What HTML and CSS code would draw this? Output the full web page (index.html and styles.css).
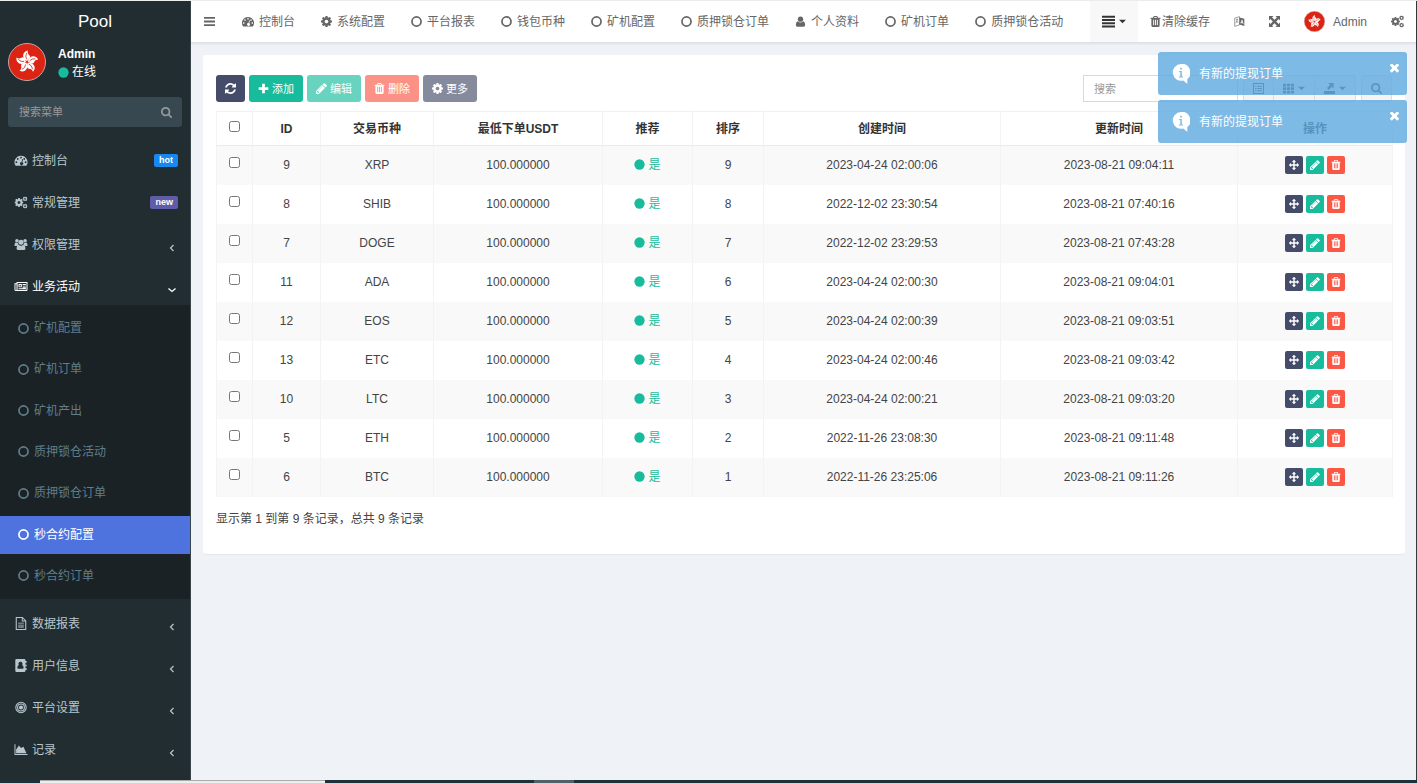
FILE: index.html
```html
<!DOCTYPE html>
<html lang="zh-CN">
<head>
<meta charset="utf-8">
<title>Pool</title>
<link rel="stylesheet" href="styles.css">
</head>
<body>
<svg class="sprite" aria-hidden="true">
  <symbol id="i-bars" viewBox="0 0 16 16"><path d="M0 1.500h16v2.600H0zM0 6.700h16v2.600H0zM0 11.900h16v2.600H0z"/></symbol>
  <symbol id="i-lines" viewBox="0 0 16 16"><path d="M0 1h16v2.400H0zM0 5h16v2.400H0zM0 9h16v2.400H0zM0 13h16v2.400H0z"/></symbol>
  <symbol id="i-ring" viewBox="0 0 16 16"><circle cx="8" cy="8" r="6.600" fill="none" stroke="currentColor" stroke-width="2.500"/></symbol>
  <symbol id="i-dot" viewBox="0 0 16 16"><circle cx="8" cy="8" r="7.500"/></symbol>
  <symbol id="i-caret" viewBox="0 0 16 16"><path d="M0 4h16l-8 8z"/></symbol>
  <symbol id="i-left" viewBox="0 0 16 16"><path d="M11 2L5 8l6 6" fill="none" stroke="currentColor" stroke-width="2.400"/></symbol>
  <symbol id="i-down" viewBox="0 0 16 16"><path d="M1 5l7 6 7-6" fill="none" stroke="currentColor" stroke-width="2.600"/></symbol>
  <symbol id="i-gauge" viewBox="0 0 16 16"><path fill-rule="evenodd" d="M8 2a8 8 0 0 0-6.800 12.200q.2.300.6.300h12.400q.4 0 .6-.3A8 8 0 0 0 8 2zM2.300 9a1.100 1.100 0 1 1 0 2.200 1.100 1.100 0 0 1 0-2.200zm1.700-4a1.100 1.100 0 1 1 0 2.200A1.100 1.100 0 0 1 4 5zm4-1.700a1.100 1.100 0 1 1 0 2.200 1.100 1.100 0 0 1 0-2.200zm4 1.700a1.100 1.100 0 1 1 0 2.200 1.100 1.100 0 0 1 0-2.200zm1.700 4a1.100 1.100 0 1 1 0 2.200 1.100 1.100 0 0 1 0-2.200zM9.700 6.300l.9.300-1 3.600a1.900 1.900 0 1 1-1-.2z"/></symbol>
  <symbol id="i-search" viewBox="64 128 1664 1664"><path d="M1216 832q0-185-131.500-316.500t-316.500-131.500-316.500 131.500-131.500 316.500 131.500 316.500 316.500 131.500 316.500-131.500 131.500-316.500zm512 832q0 52-38 90t-90 38q-54 0-90-38l-343-342q-179 124-399 124-143 0-273.500-55.500t-225-150-150-225-55.500-273.500 55.500-273.500 150-225 225-150 273.500-55.500 273.500 55.500 225 150 150 225 55.500 273.500q0 220-124 399l343 343q37 37 37 90z"/></symbol>
  <symbol id="i-trash" viewBox="192 128 1408 1536"><path d="M704 1376v-704q0-14-9-23t-23-9h-64q-14 0-23 9t-9 23v704q0 14 9 23t23 9h64q14 0 23-9t9-23zm256 0v-704q0-14-9-23t-23-9h-64q-14 0-23 9t-9 23v704q0 14 9 23t23 9h64q14 0 23-9t9-23zm256 0v-704q0-14-9-23t-23-9h-64q-14 0-23 9t-9 23v704q0 14 9 23t23 9h64q14 0 23-9t9-23zm-544-992h448l-48-117q-7-9-17-11h-317q-10 2-17 11zm928 32v64q0 14-9 23t-23 9h-96v948q0 83-47 143.500t-113 60.500h-832q-66 0-113-58.500t-47-141.500v-952h-96q-14 0-23-9t-9-23v-64q0-14 9-23t23-9h309l70-167q15-37 54-63t79-26h320q40 0 79 26t54 63l70 167h309q14 0 23 9t9 23z"/></symbol>
  <symbol id="i-cog" viewBox="128 128 1536 1536"><path d="M1152 896q0-106-75-181t-181-75-181 75-75 181 75 181 181 75 181-75 75-181zm512-109v222q0 12-8 23t-20 13l-185 28q-19 54-39 91 35 50 107 138 10 12 10 25t-9 23q-27 37-99 108t-94 71q-12 0-26-9l-138-108q-44 23-91 38-16 136-29 186-7 28-36 28h-222q-14 0-24.500-8.500t-11.500-21.500l-28-184q-49-16-90-37l-141 107q-10 9-25 9-14 0-25-11-126-114-165-168-7-10-7-23 0-12 8-23 15-21 51-66.500t54-70.500q-27-50-41-99l-183-27q-13-2-21-12.500t-8-23.500v-222q0-12 8-23t19-13l186-28q14-46 39-92-40-57-107-138-10-12-10-24 0-10 9-23 26-36 98.500-107.500t94.500-71.500q13 0 26 10l138 107q44-23 91-38 16-136 29-186 7-28 36-28h222q14 0 24.500 8.500t11.500 21.500l28 184q49 16 90 37l142-107q9-9 24-9 13 0 25 10 129 119 165 170 7 8 7 22 0 12-8 23-15 21-51 66.500t-54 70.500q26 50 41 98l183 28q13 2 21 12.500t8 23.500z"/></symbol>
  <symbol id="i-cogs" viewBox="0 0 16 16"><use href="#i-cog" x="0" y="2.500" width="11" height="11"/><use href="#i-cog" x="10" y=".5" width="6" height="6"/><use href="#i-cog" x="10" y="9.500" width="6" height="6"/></symbol>
  <symbol id="i-pencil" viewBox="128 128 1536 1536"><path d="M491 1536l91-91-235-235-91 91v107h128v128h107zm523-928q0-22-22-22-10 0-17 7l-542 542q-7 7-7 17 0 22 22 22 10 0 17-7l542-542q7-7 7-17zm-54-192l416 416-832 832h-416v-416zm683 96q0 53-37 90l-166 166-416-416 166-165q36-38 90-38 53 0 91 38l235 234q37 39 37 91z"/></symbol>
  <symbol id="i-refresh" viewBox="128 128 1536 1536"><path d="M1639 1056q0 5-1 7-64 268-268 434.500t-478 166.500q-146 0-282.500-55t-243.500-157l-129 129q-19 19-45 19t-45-19-19-45v-448q0-26 19-45t45-19h448q26 0 45 19t19 45-19 45l-137 137q71 66 161 102t187 36q134 0 250-65t186-179q11-17 53-117 8-23 30-23h192q13 0 22.500 9.500t9.500 22.500zm25-800v448q0 26-19 45t-45 19h-448q-26 0-45-19t-19-45 19-45l138-138q-148-137-349-137-134 0-250 65t-186 179q-11 17-53 117-8 23-30 23h-199q-13 0-22.500-9.500t-9.500-22.500v-7q65-268 270-434.500t480-166.500q146 0 284 55.500t245 156.500l130-129q19-19 45-19t45 19 19 45z"/></symbol>
  <symbol id="i-plus" viewBox="0 0 16 16"><path d="M6 1h4v5h5v4h-5v5H6v-5H1V6h5z"/></symbol>
  <symbol id="i-move" viewBox="0 0 1792 1792"><path d="M1792 896q0 26-19 45l-256 256q-19 19-45 19t-45-19-19-45v-128h-384v384h128q26 0 45 19t19 45-19 45l-256 256q-19 19-45 19t-45-19l-256-256q-19-19-19-45t19-45 45-19h128v-384h-384v128q0 26-19 45t-45 19-45-19l-256-256q-19-19-19-45t19-45l256-256q19-19 45-19t45 19 19 45v128h384v-384h-128q-26 0-45-19t-19-45 19-45l256-256q19-19 45-19t45 19l256 256q19 19 19 45t-19 45-45 19h-128v384h384v-128q0-26 19-45t45-19 45 19l256 256q19 19 19 45z"/></symbol>
  <symbol id="i-times" viewBox="302 434 1188 1188"><path d="M1490 1322q0 40-28 68l-136 136q-28 28-68 28t-68-28l-294-294-294 294q-28 28-68 28t-68-28l-136-136q-28-28-28-68t28-68l294-294-294-294q-28-28-28-68t28-68l136-136q28-28 68-28t68 28l294 294 294-294q28-28 68-28t68 28l136 136q28 28 28 68t-28 68l-294 294 294 294q28 28 28 68z"/></symbol>
  <symbol id="i-user" viewBox="0 0 16 16"><circle cx="8" cy="4.600" r="3.900"/><path d="M4 7.500q4 3.600 8 0 2.800 1.200 2.800 5.500 0 2.500-2.300 2.500h-9q-2.300 0-2.300-2.500 0-4.300 2.800-5.500z"/></symbol>
  <symbol id="i-users" viewBox="0 0 16 16"><circle cx="3" cy="3.400" r="2.200"/><circle cx="13" cy="3.400" r="2.200"/><circle cx="8" cy="5.200" r="3.100"/><path d="M0 9.500Q0 5.800 1.300 5.600q1.600 1 3 .3-.2 1.500.8 2.600-1.600 0-2.500 1.300H1Q0 10 0 9.500zM16 9.500q0-3.700-1.300-3.900-1.600 1-3 .3.200 1.500-.8 2.600 1.600 0 2.500 1.300H15q1 .2 1-.3zM5 8.300q3 2.200 6 0 2.500.5 2.500 4.200 0 2.300-2 2.300h-7q-2 0-2-2.300Q2.500 8.800 5 8.300z"/></symbol>
  <symbol id="i-news" viewBox="0 0 16 16"><path fill-rule="evenodd" d="M2.500 2.500H16v9.700q0 1.300-1.300 1.300H1.500Q0 13.500 0 12V4h2.500zm-1.300 2.700V12q0 .6.700.6.600 0 .6-.6V5.200zm2.600-1.500v8.500h10.400q.6 0 .6-.6V3.700zM5 5h4v4H5zm1.200 1.200v1.700h1.600V6.200zM10 5h4v1h-4zm0 2h4v1h-4zm0 2h4v1h-4zM5 10.300h9v1H5z"/></symbol>
  <symbol id="i-file" viewBox="0 0 16 16"><path fill-rule="evenodd" d="M1.500 0H10l4.500 4.500V16h-13zm1.300 1.300v13.400h10.400V5.500H9V1.300zm7.400.5v2.500h2.500zM4.500 7h7v1.100h-7zm0 2.400h7v1.100h-7zm0 2.400h7v1.100h-7z"/></symbol>
  <symbol id="i-book" viewBox="0 0 16 16"><path fill-rule="evenodd" d="M1 1.500Q1 0 2.500 0h9.500q1.500 0 1.500 1.500v1H15v2h-1.500V7H15v2h-1.500v2.500H15v2h-1.500v1q0 1.500-1.500 1.500H2.500Q1 16 1 14.500zM7.300 3.500a2.400 2.400 0 0 0-1.900 4q-1.900.7-1.900 3.200 0 1.300 1.200 1.300H10q1.200 0 1.200-1.300 0-2.500-1.900-3.200a2.400 2.400 0 0 0-2-4z"/></symbol>
  <symbol id="i-target" viewBox="0 0 16 16"><g fill="none" stroke="currentColor" stroke-width="1.300"><circle cx="8" cy="8" r="6.400"/><circle cx="8" cy="8" r="4.200"/></g><circle cx="8" cy="8" r="2.500"/></symbol>
  <symbol id="i-area" viewBox="0 0 16 16"><path d="M0 1.500h1.200v12H16v1.200H0zM2 12.700V8l3.500-5L8 6l3-1.500 3.700 8.200z"/></symbol>
  <symbol id="i-lang" viewBox="0 0 16 16"><path d="M1 3l7-2v12l-7 2zM3 5.500l3-.8M4.500 4v2q0 3-2 4.500M3.500 7q1 2 3 2.500" fill="none" stroke="currentColor" stroke-width=".9"/><path fill-rule="evenodd" d="M8 2l7 2v10.500l-7-2zm3.200 3.300l-2 5.300 1.200.3.300-1.100 1.700.5.300 1.200 1.200.4-1.700-6.300zm.4 1.800l.5 2-1-.3z"/></symbol>
  <symbol id="i-expand" viewBox="0 0 16 16"><path d="M0 0h6.500L4.500 2 8 5.500 11.500 2l-2-2H16v6.500l-2-2L10.500 8l3.500 3.500 2-2V16H9.500l2-2L8 10.500 4.500 14l2 2H0V9.500l2 2L5.500 8 2 4.500l-2 2z"/></symbol>
  <symbol id="i-list" viewBox="0 0 16 16"><path fill-rule="evenodd" d="M0 0h16v16H0zm1.500 1.500v13h13v-13zM3 4h2v1.500H3zm3.200 0H13v1.500H6.200zM3 7.200h2v1.500H3zm3.200 0H13v1.500H6.200zM3 10.500h2V12H3zm3.200 0H13V12H6.200z"/></symbol>
  <symbol id="i-grid" viewBox="0 0 16 16"><path d="M0 1h4.500v4H0zm5.700 0h4.500v4H5.700zm5.800 0H16v4h-4.500zM0 6.200h4.500v4H0zm5.700 0h4.500v4H5.700zm5.800 0H16v4h-4.500zM0 11.400h4.500v4H0zm5.700 0h4.500v4H5.700zm5.800 0H16v4h-4.500z"/></symbol>
  <symbol id="i-export" viewBox="0 0 16 16"><path d="M0 11.500h16V16H0zM6 0h8v8l-2.600-2.600L7 10 4.300 7.300l4.500-4.500z"/></symbol>
  <symbol id="i-info" viewBox="0 0 20 22"><path fill-rule="evenodd" d="M10 0a9.300 9.300 0 1 0 2.500 18.300L17 22v-5.500A9.300 9.300 0 0 0 10 0zM9.100 4h1.900v2H9.100zM8 7.700h2.900v6.100h1.300v1H7.700v-1h1.500V8.700H8z"/></symbol>
  <symbol id="i-flower" viewBox="0 0 40 40">
    <circle cx="20" cy="20" r="19.500" fill="#dc2414" stroke="#c9a9a6"/>
    <g fill="#fff" stroke="none">
      <g id="petal"><path d="M20 19C14 16 15 9 21 8q-1 3 1.500 5T20 19z"/><path d="M19.700 17q-2-3 0-6.500" fill="none" stroke="#dc2414" stroke-width=".8"/></g>
      <use href="#petal" transform="rotate(72 20 20)"/><use href="#petal" transform="rotate(144 20 20)"/><use href="#petal" transform="rotate(216 20 20)"/><use href="#petal" transform="rotate(288 20 20)"/>
    </g>
  </symbol>
</svg>

<div class="app">
  <aside class="sidebar">
    <a class="logo" href="#">Pool</a>
    <div class="profile">
      <svg class="avatar"><use href="#i-flower"/></svg>
      <div class="profile-text"><strong>Admin</strong><span class="status"><svg class="ico ico-dot"><use href="#i-dot"/></svg>在线</span></div>
    </div>
    <form class="menu-search">
      <input type="text" placeholder="搜索菜单" aria-label="搜索菜单">
      <button type="button" aria-label="搜索"><svg class="ico"><use href="#i-search"/></svg></button>
    </form>
    <nav class="menu">
      <a class="item" href="#"><svg class="ico ico-menu"><use href="#i-gauge"/></svg>控制台<span class="tag tag-hot">hot</span></a>
      <a class="item" href="#"><svg class="ico ico-menu"><use href="#i-cogs"/></svg>常规管理<span class="tag tag-new">new</span></a>
      <a class="item" href="#"><svg class="ico ico-menu"><use href="#i-users"/></svg>权限管理<svg class="arrow"><use href="#i-left"/></svg></a>
      <a class="item item-open" href="#"><svg class="ico ico-menu"><use href="#i-news"/></svg>业务活动<svg class="arrow"><use href="#i-down"/></svg></a>
      <div class="submenu">
        <a class="sub" href="#"><svg class="ico"><use href="#i-ring"/></svg>矿机配置</a>
        <a class="sub" href="#"><svg class="ico"><use href="#i-ring"/></svg>矿机订单</a>
        <a class="sub" href="#"><svg class="ico"><use href="#i-ring"/></svg>矿机产出</a>
        <a class="sub" href="#"><svg class="ico"><use href="#i-ring"/></svg>质押锁仓活动</a>
        <a class="sub" href="#"><svg class="ico"><use href="#i-ring"/></svg>质押锁仓订单</a>
        <a class="sub sub-active" href="#"><svg class="ico"><use href="#i-ring"/></svg>秒合约配置</a>
        <a class="sub" href="#"><svg class="ico"><use href="#i-ring"/></svg>秒合约订单</a>
      </div>
      <a class="item" href="#"><svg class="ico ico-menu"><use href="#i-file"/></svg>数据报表<svg class="arrow"><use href="#i-left"/></svg></a>
      <a class="item" href="#"><svg class="ico ico-menu"><use href="#i-book"/></svg>用户信息<svg class="arrow"><use href="#i-left"/></svg></a>
      <a class="item" href="#"><svg class="ico ico-menu"><use href="#i-target"/></svg>平台设置<svg class="arrow"><use href="#i-left"/></svg></a>
      <a class="item" href="#"><svg class="ico ico-menu"><use href="#i-area"/></svg>记录<svg class="arrow"><use href="#i-left"/></svg></a>
    </nav>
  </aside>

  <div class="main">
    <header class="topbar">
      <nav class="tabs">
        <button class="toggle" type="button" aria-label="菜单"><svg class="ico"><use href="#i-bars"/></svg></button>
        <a class="tab" href="#"><svg class="ico ico-wide"><use href="#i-gauge"/></svg>控制台</a>
        <a class="tab" href="#"><svg class="ico"><use href="#i-cog"/></svg>系统配置</a>
        <a class="tab" href="#"><svg class="ico"><use href="#i-ring"/></svg>平台报表</a>
        <a class="tab" href="#"><svg class="ico"><use href="#i-ring"/></svg>钱包币种</a>
        <a class="tab" href="#"><svg class="ico"><use href="#i-ring"/></svg>矿机配置</a>
        <a class="tab" href="#"><svg class="ico"><use href="#i-ring"/></svg>质押锁仓订单</a>
        <a class="tab" href="#"><svg class="ico"><use href="#i-user"/></svg>个人资料</a>
        <a class="tab" href="#"><svg class="ico"><use href="#i-ring"/></svg>矿机订单</a>
        <a class="tab" href="#"><svg class="ico"><use href="#i-ring"/></svg>质押锁仓活动</a>
      </nav>
      <div class="tools">
        <button class="tool tool-list" type="button" aria-label="标签页"><svg class="ico ico-wide"><use href="#i-lines"/></svg><svg class="caret"><use href="#i-caret"/></svg></button>
        <a class="tool tool-clear" href="#"><svg class="ico"><use href="#i-trash"/></svg>清除缓存</a>
        <a class="tool" href="#" aria-label="语言"><svg class="ico"><use href="#i-lang"/></svg></a>
        <a class="tool" href="#" aria-label="全屏"><svg class="ico"><use href="#i-expand"/></svg></a>
        <a class="tool tool-user" href="#"><svg class="avatar-small"><use href="#i-flower"/></svg>Admin</a>
        <a class="tool" href="#" aria-label="设置"><svg class="ico ico-wide"><use href="#i-cogs"/></svg></a>
      </div>
    </header>

    <main class="content">
      <section class="card">
        <div class="toolbar">
          <button class="btn btn-dark" type="button" aria-label="刷新"><svg class="ico"><use href="#i-refresh"/></svg></button>
          <button class="btn btn-green" type="button"><svg class="ico"><use href="#i-plus"/></svg>添加</button>
          <button class="btn btn-green faded" type="button"><svg class="ico"><use href="#i-pencil"/></svg>编辑</button>
          <button class="btn btn-red faded" type="button"><svg class="ico"><use href="#i-trash"/></svg>删除</button>
          <button class="btn btn-dark faded" type="button"><svg class="ico"><use href="#i-cog"/></svg>更多</button>
          <div class="filters">
            <input class="search" type="text" placeholder="搜索" aria-label="搜索">
            <div class="group">
              <button type="button" aria-label="视图"><svg class="ico"><use href="#i-list"/></svg></button>
              <button type="button" aria-label="列"><svg class="ico"><use href="#i-grid"/></svg><svg class="caret"><use href="#i-caret"/></svg></button>
              <button type="button" aria-label="导出"><svg class="ico"><use href="#i-export"/></svg><svg class="caret"><use href="#i-caret"/></svg></button>
            </div>
            <div class="group"><button type="button" aria-label="查找"><svg class="ico"><use href="#i-search"/></svg></button></div>
          </div>
        </div>

        <table class="grid">
          <colgroup><col class="c-check"><col class="c-id"><col class="c-coin"><col class="c-min"><col class="c-rec"><col class="c-sort"><col class="c-time"><col class="c-time"><col class="c-act"></colgroup>
          <thead><tr><th><input type="checkbox" aria-label="全选"></th><th>ID</th><th>交易币种</th><th>最低下单USDT</th><th>推荐</th><th>排序</th><th>创建时间</th><th>更新时间</th><th>操作</th></tr></thead>
          <tbody>
            <tr><td><input type="checkbox" aria-label="选择 9"></td><td>9</td><td>XRP</td><td>100.000000</td><td><span class="yes"><svg class="ico"><use href="#i-dot"/></svg>是</span></td><td>9</td><td>2023-04-24 02:00:06</td><td>2023-08-21 09:04:11</td><td><div class="acts"><button class="act btn-dark" type="button" aria-label="拖动"><svg><use href="#i-move"/></svg></button><button class="act btn-green" type="button" aria-label="编辑"><svg><use href="#i-pencil"/></svg></button><button class="act btn-red" type="button" aria-label="删除"><svg><use href="#i-trash"/></svg></button></div></td></tr>
            <tr><td><input type="checkbox" aria-label="选择 8"></td><td>8</td><td>SHIB</td><td>100.000000</td><td><span class="yes"><svg class="ico"><use href="#i-dot"/></svg>是</span></td><td>8</td><td>2022-12-02 23:30:54</td><td>2023-08-21 07:40:16</td><td><div class="acts"><button class="act btn-dark" type="button" aria-label="拖动"><svg><use href="#i-move"/></svg></button><button class="act btn-green" type="button" aria-label="编辑"><svg><use href="#i-pencil"/></svg></button><button class="act btn-red" type="button" aria-label="删除"><svg><use href="#i-trash"/></svg></button></div></td></tr>
            <tr><td><input type="checkbox" aria-label="选择 7"></td><td>7</td><td>DOGE</td><td>100.000000</td><td><span class="yes"><svg class="ico"><use href="#i-dot"/></svg>是</span></td><td>7</td><td>2022-12-02 23:29:53</td><td>2023-08-21 07:43:28</td><td><div class="acts"><button class="act btn-dark" type="button" aria-label="拖动"><svg><use href="#i-move"/></svg></button><button class="act btn-green" type="button" aria-label="编辑"><svg><use href="#i-pencil"/></svg></button><button class="act btn-red" type="button" aria-label="删除"><svg><use href="#i-trash"/></svg></button></div></td></tr>
            <tr><td><input type="checkbox" aria-label="选择 11"></td><td>11</td><td>ADA</td><td>100.000000</td><td><span class="yes"><svg class="ico"><use href="#i-dot"/></svg>是</span></td><td>6</td><td>2023-04-24 02:00:30</td><td>2023-08-21 09:04:01</td><td><div class="acts"><button class="act btn-dark" type="button" aria-label="拖动"><svg><use href="#i-move"/></svg></button><button class="act btn-green" type="button" aria-label="编辑"><svg><use href="#i-pencil"/></svg></button><button class="act btn-red" type="button" aria-label="删除"><svg><use href="#i-trash"/></svg></button></div></td></tr>
            <tr><td><input type="checkbox" aria-label="选择 12"></td><td>12</td><td>EOS</td><td>100.000000</td><td><span class="yes"><svg class="ico"><use href="#i-dot"/></svg>是</span></td><td>5</td><td>2023-04-24 02:00:39</td><td>2023-08-21 09:03:51</td><td><div class="acts"><button class="act btn-dark" type="button" aria-label="拖动"><svg><use href="#i-move"/></svg></button><button class="act btn-green" type="button" aria-label="编辑"><svg><use href="#i-pencil"/></svg></button><button class="act btn-red" type="button" aria-label="删除"><svg><use href="#i-trash"/></svg></button></div></td></tr>
            <tr><td><input type="checkbox" aria-label="选择 13"></td><td>13</td><td>ETC</td><td>100.000000</td><td><span class="yes"><svg class="ico"><use href="#i-dot"/></svg>是</span></td><td>4</td><td>2023-04-24 02:00:46</td><td>2023-08-21 09:03:42</td><td><div class="acts"><button class="act btn-dark" type="button" aria-label="拖动"><svg><use href="#i-move"/></svg></button><button class="act btn-green" type="button" aria-label="编辑"><svg><use href="#i-pencil"/></svg></button><button class="act btn-red" type="button" aria-label="删除"><svg><use href="#i-trash"/></svg></button></div></td></tr>
            <tr><td><input type="checkbox" aria-label="选择 10"></td><td>10</td><td>LTC</td><td>100.000000</td><td><span class="yes"><svg class="ico"><use href="#i-dot"/></svg>是</span></td><td>3</td><td>2023-04-24 02:00:21</td><td>2023-08-21 09:03:20</td><td><div class="acts"><button class="act btn-dark" type="button" aria-label="拖动"><svg><use href="#i-move"/></svg></button><button class="act btn-green" type="button" aria-label="编辑"><svg><use href="#i-pencil"/></svg></button><button class="act btn-red" type="button" aria-label="删除"><svg><use href="#i-trash"/></svg></button></div></td></tr>
            <tr><td><input type="checkbox" aria-label="选择 5"></td><td>5</td><td>ETH</td><td>100.000000</td><td><span class="yes"><svg class="ico"><use href="#i-dot"/></svg>是</span></td><td>2</td><td>2022-11-26 23:08:30</td><td>2023-08-21 09:11:48</td><td><div class="acts"><button class="act btn-dark" type="button" aria-label="拖动"><svg><use href="#i-move"/></svg></button><button class="act btn-green" type="button" aria-label="编辑"><svg><use href="#i-pencil"/></svg></button><button class="act btn-red" type="button" aria-label="删除"><svg><use href="#i-trash"/></svg></button></div></td></tr>
            <tr><td><input type="checkbox" aria-label="选择 6"></td><td>6</td><td>BTC</td><td>100.000000</td><td><span class="yes"><svg class="ico"><use href="#i-dot"/></svg>是</span></td><td>1</td><td>2022-11-26 23:25:06</td><td>2023-08-21 09:11:26</td><td><div class="acts"><button class="act btn-dark" type="button" aria-label="拖动"><svg><use href="#i-move"/></svg></button><button class="act btn-green" type="button" aria-label="编辑"><svg><use href="#i-pencil"/></svg></button><button class="act btn-red" type="button" aria-label="删除"><svg><use href="#i-trash"/></svg></button></div></td></tr>
          </tbody>
        </table>
        <p class="summary">显示第 1 到第 9 条记录，总共 9 条记录</p>
      </section>
    </main>
  </div>
</div>
<footer class="taskbar"><span class="task-start"></span><span class="task-field"></span><span class="task-rest"></span><span class="task-active"></span></footer>

<div class="toasts">
  <div class="toast" role="status"><svg class="toast-icon"><use href="#i-info"/></svg>有新的提现订单<button type="button" aria-label="关闭"><svg><use href="#i-times"/></svg></button></div>
  <div class="toast" role="status"><svg class="toast-icon"><use href="#i-info"/></svg>有新的提现订单<button type="button" aria-label="关闭"><svg><use href="#i-times"/></svg></button></div>
</div>
</body>
</html>
```
FILE: styles.css
```css
* { box-sizing: border-box; }
body {
  margin: 0;
  min-height: 100vh;
  display: flex;
  flex-direction: column;
  position: relative;
  border-top: 1px solid #ececec;
  background: #eff3f7;
  color: #444;
  font-family: "Liberation Sans", "Noto Sans CJK SC", sans-serif;
  font-size: 12px;
  line-height: 18px;
}
a { color: inherit; text-decoration: none; }
button, input { font: inherit; color: inherit; margin: 0; }
button { padding: 0; border: 0; background: none; }
svg { fill: currentColor; flex: none; display: block; }
.sprite { position: absolute; width: 0; height: 0; }
.ico { width: 11px; height: 11px; }
.ico-wide { width: 13px; height: 13px; }
.caret { width: 7px; height: 7px; }

.app { flex: 1; display: flex; border-right: 1px solid #33383c; }

/* Sidebar */
.sidebar { width: 191px; flex: none; background: #222d32; color: #b8c7ce; border-right: 1px solid #39454b; }
.logo { display: block; height: 42px; line-height: 41px; text-align: center; font-size: 17px; color: #fff; }
.profile { display: flex; gap: 12px; padding: 0 8px; color: #fff; }
.avatar { width: 38px; height: 38px; }
.profile-text { display: flex; flex-direction: column; padding-top: 2px; }
.status { display: flex; align-items: center; gap: 3px; }
.ico-dot { color: #18bc9c; }
.menu-search { display: flex; align-items: center; height: 30px; margin: 16px 8px 12px; padding: 0 10px 0 11px; border-radius: 3px; background: #374850; color: #999; }
.menu-search input { flex: 1; min-width: 0; padding: 0; border: 0; outline: 0; background: none; font-size: 11px; }
.menu-search input::placeholder { color: #999; }
.item { display: flex; align-items: center; height: 42px; gap: 4px; padding: 1px 12px 0 14px; }
.ico-menu { width: 14px; height: 13px; }
.item-open { height: 40px; padding-top: 3px; color: #fff; }
.arrow { width: 8px; height: 8px; margin: 6px 2px 0 auto; }
.tag { margin-left: auto; padding: 0 5px; border-radius: 2px; font-size: 9px; line-height: 13px; font-weight: bold; color: #fff; }
.tag-hot { background: #1688f1; }
.tag-new { background: #605ca8; }
.submenu { display: flex; flex-direction: column; justify-content: space-between; min-height: 294px; padding: 4px 0; margin-bottom: 3px; background: #1a2226; color: #5f7e8c; }
.sub { display: flex; align-items: center; gap: 5px; height: 38px; padding-left: 18px; }
.sub-active { background: #4e73df; color: #fff; }

/* Top bar */
.main { flex: 1; min-width: 0; }
.topbar { display: flex; justify-content: space-between; height: 42px; background: #fff; color: #666; border-bottom: 1px solid #dde1e5; box-shadow: 0 1px 2px rgba(0, 20, 40, .08); }
.tabs, .tools { display: flex; white-space: nowrap; }
.toggle { width: 38px; padding-left: 13px; }
.tab { display: flex; align-items: center; gap: 5px; padding: 0 13px; }
.tab .ico-wide { width: 12px; }
.tool { display: flex; align-items: center; justify-content: center; gap: 8px; padding: 0 12px; }
.tool-list { gap: 4px; background: #f8f8f8; color: #333; }
.tool-clear { gap: 1px; }
.avatar-small { width: 21px; height: 21px; }

/* Content */
.content { padding: 12px 11px 12px 12px; }
.card { padding: 20px 13px 26px; border-radius: 3px; background: #fff; box-shadow: 0 1px 1px rgba(0, 0, 0, .05); }
.toolbar { display: flex; gap: 4px; margin-bottom: 9px; }
.btn { display: flex; align-items: center; justify-content: center; gap: 3px; height: 27px; padding: 0 9px; border-radius: 3px; color: #fff; font-size: 11px; white-space: nowrap; }
.btn-dark { background: #444c69; }
.btn-green { background: #18bc9c; }
.btn-red { background: #fb5745; }
.faded { opacity: .65; }
.filters { display: flex; gap: 5px; margin-left: auto; }
.search { width: 155px; height: 27px; padding: 0 10px; border: 1px solid #d6dae0; font-size: 11px; }
.search::placeholder { color: #999; }
.group { display: flex; border: 1px solid #ddd; border-radius: 3px; background: #f4f4f4; color: #444; }
.group button { display: flex; align-items: center; gap: 4px; padding: 0 9px; }
.group button + button { border-left: 1px solid #ddd; }

.grid { width: 100%; table-layout: fixed; border-collapse: collapse; text-align: center; }
.grid th, .grid td { padding: 0; border: 1px solid #f3f3f3; border-width: 0 1px; white-space: nowrap; }
.grid thead tr { height: 34px; border-top: 1px solid #f0f0f0; border-bottom: 1px solid #eaeaea; color: #333; }
.grid tbody tr { height: 39px; }
.grid tbody tr:nth-child(odd) { background: #f9f9f9; }
.grid td { padding-bottom: 1px; }
.grid input { display: block; width: 11px; height: 11px; margin: 0 auto 4px; }
.c-check { width: 36px; }
.c-id { width: 68px; }
.c-coin { width: 113px; }
.c-min { width: 169px; }
.c-rec { width: 90px; }
.c-sort { width: 71px; }
.c-time { width: 237px; }
.c-act { width: 155px; }
.yes { display: flex; align-items: center; justify-content: center; gap: 3px; color: #18bc9c; }
.acts { display: flex; justify-content: center; gap: 3px; }
.act { display: flex; align-items: center; justify-content: center; width: 18px; height: 18px; border-radius: 2px; color: #fff; }
.act svg { width: 10px; height: 10px; }
.summary { margin: 13px 0 0; }

/* Bottom strip */
.taskbar { display: flex; height: 3px; background: #203038; }
.task-start { width: 40px; }
.task-field { width: 285px; border-top: 1px solid #aaa; background: #eee; }
.task-rest { width: 209px; }
.task-active { width: 40px; background: #525f69; }

/* Notifications */
.toasts { position: absolute; top: 51px; right: 10px; display: grid; gap: 5px; width: 249px; }
.toast { display: flex; align-items: center; height: 43px; gap: 9px; padding: 0 8px 0 14px; border-radius: 3px; background: #5faae0; color: #fff; opacity: .8; }
.toast-icon { width: 18px; height: 20px; }
.toast button { align-self: flex-start; margin: 12px 0 0 auto; }
.toast button svg { width: 9px; height: 9px; }
```
